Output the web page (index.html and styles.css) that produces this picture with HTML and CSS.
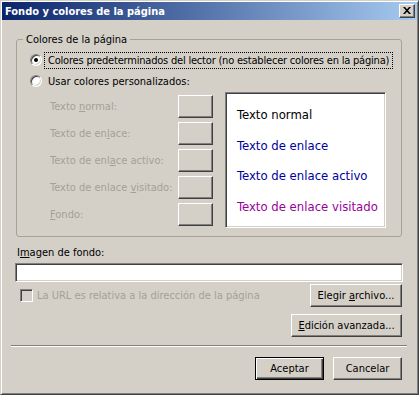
FILE: index.html
```html
<!DOCTYPE html>
<html lang="es">
<head>
<meta charset="utf-8">
<title>Fondo y colores de la página</title>
<link rel="stylesheet" href="styles.css">
</head>
<body>
<div class="window">
  <div class="titlebar">
    <span class="title">Fondo y colores de la página</span>
    <span class="close"><svg width="8" height="7" viewBox="0 0 8 7"><path d="M0 0h2l2 2.2L6 0h2L5 3.5 8 7H6L4 4.8 2 7H0l3-3.5z" fill="#000"/></svg></span>
  </div>
  <div class="content">
    <fieldset class="group">
      <legend>Colores de la página</legend>
      <div class="radio-row first">
        <span class="radio checked"></span>
        <span class="radio-label focus">Colores predeterminados del lector (no establecer colores en la página)</span>
      </div>
      <div class="radio-row second">
        <span class="radio"></span>
        <span class="radio-label">Usar colores personalizados:</span>
      </div>
      <div class="colors">
        <div class="swatches">
          <span class="dlabel">Texto <u>n</u>ormal:</span><span class="swatch"></span>
          <span class="dlabel">Texto de en<u>l</u>ace:</span><span class="swatch"></span>
          <span class="dlabel">Texto de enl<u>a</u>ce activo:</span><span class="swatch"></span>
          <span class="dlabel">Texto de enlace <u>v</u>isitado:</span><span class="swatch"></span>
          <span class="dlabel"><u>F</u>ondo:</span><span class="swatch"></span>
        </div>
        <div class="preview">
          <div class="pv normal">Texto normal</div>
          <div class="pv link">Texto de enlace</div>
          <div class="pv link">Texto de enlace activo</div>
          <div class="pv visited">Texto de enlace visitado</div>
        </div>
      </div>
    </fieldset>
    <div class="img-label">I<u>m</u>agen de fondo:</div>
    <div class="edit"></div>
    <div class="row-file">
      <span class="check"></span>
      <span class="check-label">La URL es relativa a la dirección de la página</span>
      <span class="btn btn-file"><span>Elegir <u>a</u>rchivo...</span></span>
    </div>
    <div class="row-adv">
      <span class="btn btn-adv"><span><u>E</u>dición avanzada...</span></span>
    </div>
    <div class="separator"></div>
    <div class="row-actions">
      <span class="btn btn-ok default"><span>Aceptar</span></span>
      <span class="btn btn-cancel"><span>Cancelar</span></span>
    </div>
  </div>
</div>
</body>
</html>
```
FILE: styles.css
```css
html, body {
  margin: 0;
  padding: 0;
  background: #d4d0c8;
}
body {
  font-family: "DejaVu Sans Condensed", "DejaVu Sans", sans-serif;
  font-size: 11px;
  line-height: 13px;
  color: #000;
}
.window {
  width: 419px;
  height: 395px;
  box-sizing: border-box;
  background: #d4d0c8;
  border: 1px solid;
  border-color: #d4d0c8 #404040 #404040 #d4d0c8;
  box-shadow: inset 1px 1px #fff, inset -1px -1px #808080;
  padding: 1px;
  display: flex;
  flex-direction: column;
}
.titlebar {
  height: 18px;
  background: linear-gradient(to right, #0a246a, #a6caf0);
  display: flex;
  align-items: center;
  justify-content: space-between;
  padding: 0 2px 0 3px;
}
.title {
  color: #fff;
  font-weight: bold;
  font-size: 11px;
}
.close {
  width: 16px;
  height: 14px;
  box-sizing: border-box;
  background: #d4d0c8;
  border: 1px solid;
  border-color: #fff #404040 #404040 #fff;
  box-shadow: inset -1px -1px #808080;
  display: flex;
  align-items: center;
  justify-content: center;
  padding: 0 1px 1px 0;
}
.close svg { display: block; }
.content {
  display: flex;
  flex-direction: column;
  padding: 0 14px 0 13px;
}
.group {
  margin: 13px 1px 0 1px;
  padding: 0 0 8px 0;
  border: 1px solid #a5a297;
  border-radius: 3px;
  min-width: 0;
}
.group legend {
  margin-left: 6px;
  padding: 0 3px;
  line-height: 13px;
}
.radio-row {
  display: flex;
  align-items: center;
  height: 16px;
  padding-left: 13px;
}
.radio-row.first { margin-top: 6px; }
.radio-row.second { margin-top: 5px; }
.radio {
  width: 12px;
  height: 12px;
  box-sizing: border-box;
  border-radius: 50%;
  background: #fff;
  border: 1px solid;
  border-color: #808080 #fff #fff #808080;
  box-shadow: inset 1px 1px #404040, inset -1px -1px #d4d0c8;
  display: flex;
  align-items: center;
  justify-content: center;
}
.radio.checked::after {
  content: "";
  width: 4px;
  height: 4px;
  border-radius: 50%;
  background: #000;
}
.radio-label {
  margin-left: 2px;
  padding: 1px 3px;
  border: 1px dotted transparent;
  white-space: nowrap;
}
.radio-label.focus {
  border-color: #000;
  letter-spacing: -0.2px;
}
.colors {
  display: flex;
  align-items: flex-start;
  margin-top: 3px;
  padding-left: 33px;
}
.swatches {
  display: grid;
  grid-template-columns: 128px 35px;
  grid-auto-rows: 23px;
  row-gap: 4px;
  align-items: center;
  margin-top: 3px;
}
.dlabel {
  color: #a3a196;
  white-space: nowrap;
}
.swatch {
  width: 35px;
  height: 23px;
  box-sizing: border-box;
  background: #d4d0c8;
  border: 1px solid;
  border-color: #fff #404040 #404040 #fff;
  box-shadow: inset -1px -1px #808080;
}
.preview {
  width: 161px;
  height: 136px;
  box-sizing: border-box;
  margin-left: 12px;
  background: #fff;
  border: 1px solid;
  border-color: #808080 #fff #fff #808080;
  box-shadow: inset 1px 1px #404040, inset -1px -1px #d4d0c8;
  padding: 7px 0 0 11px;
  font-size: 13px;
  white-space: nowrap;
}
.pv { line-height: 30.5px; }
.pv.normal { color: #000; }
.pv.link { color: #0000a0; }
.pv.visited { color: #990099; }
.img-label {
  margin: 9px 0 0 2px;
}
.edit {
  margin-top: 4px;
  height: 19px;
  box-sizing: border-box;
  background: #fff;
  border: 1px solid;
  border-color: #808080 #fff #fff #808080;
  box-shadow: inset 1px 1px #404040, inset -1px -1px #d4d0c8;
}
.row-file {
  display: flex;
  align-items: center;
  margin-top: 2px;
}
.check {
  width: 13px;
  height: 13px;
  box-sizing: border-box;
  margin-left: 5px;
  border: 1px solid;
  border-color: #808080 #fff #fff #808080;
  box-shadow: inset 1px 1px #404040, inset -1px -1px #d4d0c8;
}
.check-label {
  margin-left: 4px;
  color: #a3a196;
  flex: 1;
  white-space: nowrap;
}
.btn {
  height: 23px;
  box-sizing: border-box;
  display: flex;
  align-items: center;
  justify-content: center;
  background: #d4d0c8;
  border: 1px solid;
  border-color: #fff #404040 #404040 #fff;
  box-shadow: inset -1px -1px #808080;
  margin-right: 1px;
  white-space: nowrap;
}
.btn-file { width: 92px; }
.row-adv {
  display: flex;
  justify-content: flex-end;
  margin-top: 7px;
}
.btn-adv { width: 111px; }
.separator {
  margin: 8px -4px 0 -4px;
  border-top: 1px solid #808080;
  border-bottom: 1px solid #fff;
  height: 0;
}
.row-actions {
  display: flex;
  justify-content: flex-end;
  gap: 8px;
  margin-top: 10px;
}
.btn-ok, .btn-cancel { width: 69px; }
.btn.default {
  border: 1px solid #000;
  box-shadow: inset 1px 1px #fff, inset -1px -1px #404040, inset -2px -2px #808080;
}
```
